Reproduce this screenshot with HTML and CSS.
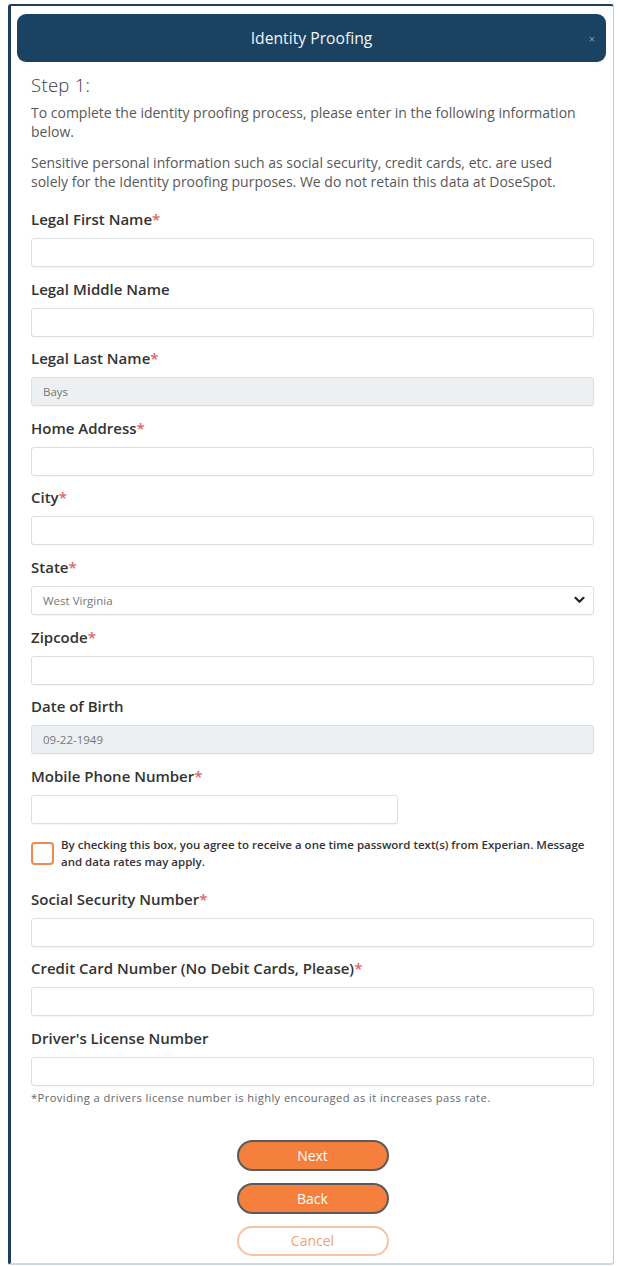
FILE: index.html
```html
<!DOCTYPE html>
<html lang="en">
<head>
<meta charset="utf-8">
<title>Identity Proofing</title>
<link rel="stylesheet" href="styles.css">
</head>
<body>
<div class="modal">
  <div class="modal-header">
    <span class="modal-title">Identity Proofing</span>
    <span class="modal-close">×</span>
  </div>
  <div class="modal-body">
    <h2 class="step">Step 1:</h2>
    <p class="intro">To complete the identity proofing process, please enter in the following information below.</p>
    <p class="intro second">Sensitive personal information such as social security, credit cards, etc. are used<br>solely for the Identity proofing purposes. We do not retain this data at DoseSpot.</p>

    <div class="field first">
      <label class="label">Legal First Name<span class="req">*</span></label>
      <div class="input"></div>
    </div>
    <div class="field">
      <label class="label">Legal Middle Name</label>
      <div class="input"></div>
    </div>
    <div class="field">
      <label class="label">Legal Last Name<span class="req">*</span></label>
      <div class="input disabled">Bays</div>
    </div>
    <div class="field">
      <label class="label">Home Address<span class="req">*</span></label>
      <div class="input"></div>
    </div>
    <div class="field">
      <label class="label">City<span class="req">*</span></label>
      <div class="input"></div>
    </div>
    <div class="field">
      <label class="label">State<span class="req">*</span></label>
      <div class="input select">West Virginia
        <svg class="chevron" width="11" height="8" viewBox="0 0 11 8"><path d="M1.5 1.8 L5.5 5.8 L9.5 1.8" fill="none" stroke="#222" stroke-width="2.2" stroke-linecap="round" stroke-linejoin="round"/></svg>
      </div>
    </div>
    <div class="field">
      <label class="label">Zipcode<span class="req">*</span></label>
      <div class="input"></div>
    </div>
    <div class="field">
      <label class="label">Date of Birth</label>
      <div class="input disabled">09-22-1949</div>
    </div>
    <div class="field">
      <label class="label">Mobile Phone Number<span class="req">*</span></label>
      <div class="input phone"></div>
    </div>

    <div class="consent">
      <span class="checkbox"></span>
      <span class="consent-text">By checking this box, you agree to receive a one time password text(s) from Experian. Message<br>and data rates may apply.</span>
    </div>

    <div class="field after-consent">
      <label class="label">Social Security Number<span class="req">*</span></label>
      <div class="input"></div>
    </div>
    <div class="field">
      <label class="label">Credit Card Number (No Debit Cards, Please)<span class="req">*</span></label>
      <div class="input"></div>
    </div>
    <div class="field">
      <label class="label">Driver's License Number</label>
      <div class="input"></div>
    </div>
    <p class="note">*Providing a drivers license number is highly encouraged as it increases pass rate.</p>

    <div class="actions">
      <button class="btn btn-primary">Next</button>
      <button class="btn btn-primary">Back</button>
      <button class="btn btn-outline">Cancel</button>
    </div>
  </div>
</div>
</body>
</html>
```

FILE: styles.css
```css
html, body {
  margin: 0;
  padding: 0;
  background: #ffffff;
}
body {
  padding: 4px 6px 0 8px;
  font-family: "Open Sans", "Liberation Sans", sans-serif;
  color: #333;
}
.modal {
  box-sizing: border-box;
  width: 606px;
  height: 1261px;
  background: #fff;
  border-top: 2px solid #1f3f5c;
  border-left: 3px solid #1f3f5c;
  border-right: 1px solid #b9d0dc;
  border-bottom: 2px solid #c9dbe4;
  border-radius: 3px;
  padding: 8px 0 0 0;
}
.modal-header {
  position: relative;
  margin: 0 7px 0 6px;
  height: 48px;
  background: #1c4262;
  border-radius: 9px;
  display: flex;
  align-items: center;
  justify-content: center;
}
.modal-title {
  color: #f2f5f8;
  font-size: 15.7px;
}
.modal-close {
  position: absolute;
  right: 11px;
  top: 19px;
  color: #8d9caa;
  font-size: 11px;
  line-height: 11px;
}
.modal-body {
  padding: 0 19px 0 20px;
}
.step {
  margin: 12px 0 0 0;
  font-size: 18.5px;
  line-height: 22px;
  font-weight: 300;
  letter-spacing: 0.3px;
  color: #3a3a3a;
}
.intro {
  margin: 7px 0 0 0;
  font-size: 14px;
  line-height: 19px;
  color: #585858;
}
.intro.second {
  margin-top: 12px;
}
.field {
  margin-top: 11.6px;
}
.field.first {
  margin-top: 18px;
}
.label {
  display: block;
  font-size: 15px;
  line-height: 20px;
  font-weight: 600;
  color: #333;
}
.req {
  color: #e06464;
}
.input {
  box-sizing: border-box;
  margin-top: 9px;
  height: 29px;
  border: 1px solid #dcdfe2;
  border-radius: 3px;
  background: #fff;
  box-shadow: 0 1px 1px rgba(0,0,0,0.04);
  padding: 0 11px;
  display: flex;
  align-items: center;
  font-size: 11.5px;
  color: #777;
}
.input.disabled {
  background: #edf0f2;
}
.input.phone {
  width: 367px;
}
.input.select {
  justify-content: space-between;
  padding-right: 8px;
}
.chevron {
  display: block;
}
.consent {
  display: flex;
  align-items: flex-start;
  gap: 7px;
  margin-top: 12px;
}
.checkbox {
  box-sizing: border-box;
  flex: none;
  width: 23px;
  height: 23px;
  margin-top: 6px;
  border: 2px solid #ef8a4e;
  border-radius: 4px;
}
.consent-text {
  font-size: 11.5px;
  line-height: 17px;
  font-weight: 600;
  color: #333;
  white-space: nowrap;
}
.field.after-consent {
  margin-top: 19px;
}
.note {
  margin: 5px 0 0 0;
  font-size: 11.2px;
  line-height: 14px;
  letter-spacing: 0.4px;
  color: #666;
}
.actions {
  margin-top: 35px;
  display: flex;
  flex-direction: column;
  align-items: center;
  gap: 12px;
}
.btn {
  box-sizing: border-box;
  width: 152px;
  height: 31px;
  border-radius: 16px;
  font-family: "Open Sans", "Liberation Sans", sans-serif;
  font-size: 14px;
  cursor: pointer;
  padding: 0;
}
.btn-primary {
  background: #f57f3d;
  border: 2px solid #5a5a5a;
  color: #fff;
}
.btn-outline {
  height: 30px;
  background: #fff;
  border: 2px solid #f6c3a4;
  color: #f0a275;
}
```
